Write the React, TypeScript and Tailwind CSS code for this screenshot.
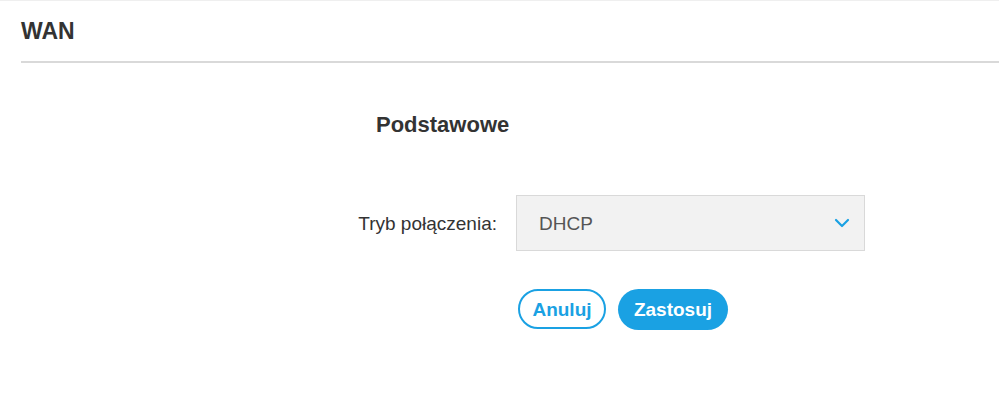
import { useState } from 'react'

const font = { fontFamily: '"Liberation Sans", Arial, sans-serif' }

function Chevron() {
  return (
    <svg width="16" height="10" viewBox="0 0 16 10" fill="none">
      <polyline points="2,2 8,8 14,2" stroke="#1aa1e3" strokeWidth="2.2" strokeLinecap="round" strokeLinejoin="round" />
    </svg>
  )
}

export default function App() {
  const [mode] = useState('DHCP')

  return (
    <div style={font} className="w-[999px] h-[405px] bg-white border-t border-[#efefef] text-[#333]">
      {/* Header */}
      <div className="ml-[21px] h-[62px] flex items-center border-b-2 border-[#d9d9d9]">
        <h1 className="text-[23px] font-bold leading-none pt-[1px]">WAN</h1>
      </div>

      {/* Form */}
      <div className="pl-[340px]">
        <h2 className="ml-[36px] mt-[49px] text-[22px] leading-[26px] font-bold">Podstawowe</h2>

        <div className="mt-[57px] flex items-center">
          <label className="w-[157px] text-right text-[19px] leading-none">Tryb połączenia:</label>
          <div className="ml-[19px] w-[349px] h-[56px] bg-[#f2f2f2] border border-[#d9d9d9] flex items-center justify-between pl-[22px] pr-[14px]">
            <span className="text-[19px] text-[#555] leading-none">{mode}</span>
            <Chevron />
          </div>
        </div>

        <div className="mt-[38px] ml-[178px] flex gap-[12px]">
          <button className="w-[88px] h-[40px] rounded-full border-2 border-[#1aa1e3] text-[#1aa1e3] text-[19px] font-bold leading-none">
            Anuluj
          </button>
          <button className="w-[110px] h-[41px] rounded-full bg-[#1aa1e3] text-white text-[19px] font-bold leading-none">
            Zastosuj
          </button>
        </div>
      </div>
    </div>
  )
}
